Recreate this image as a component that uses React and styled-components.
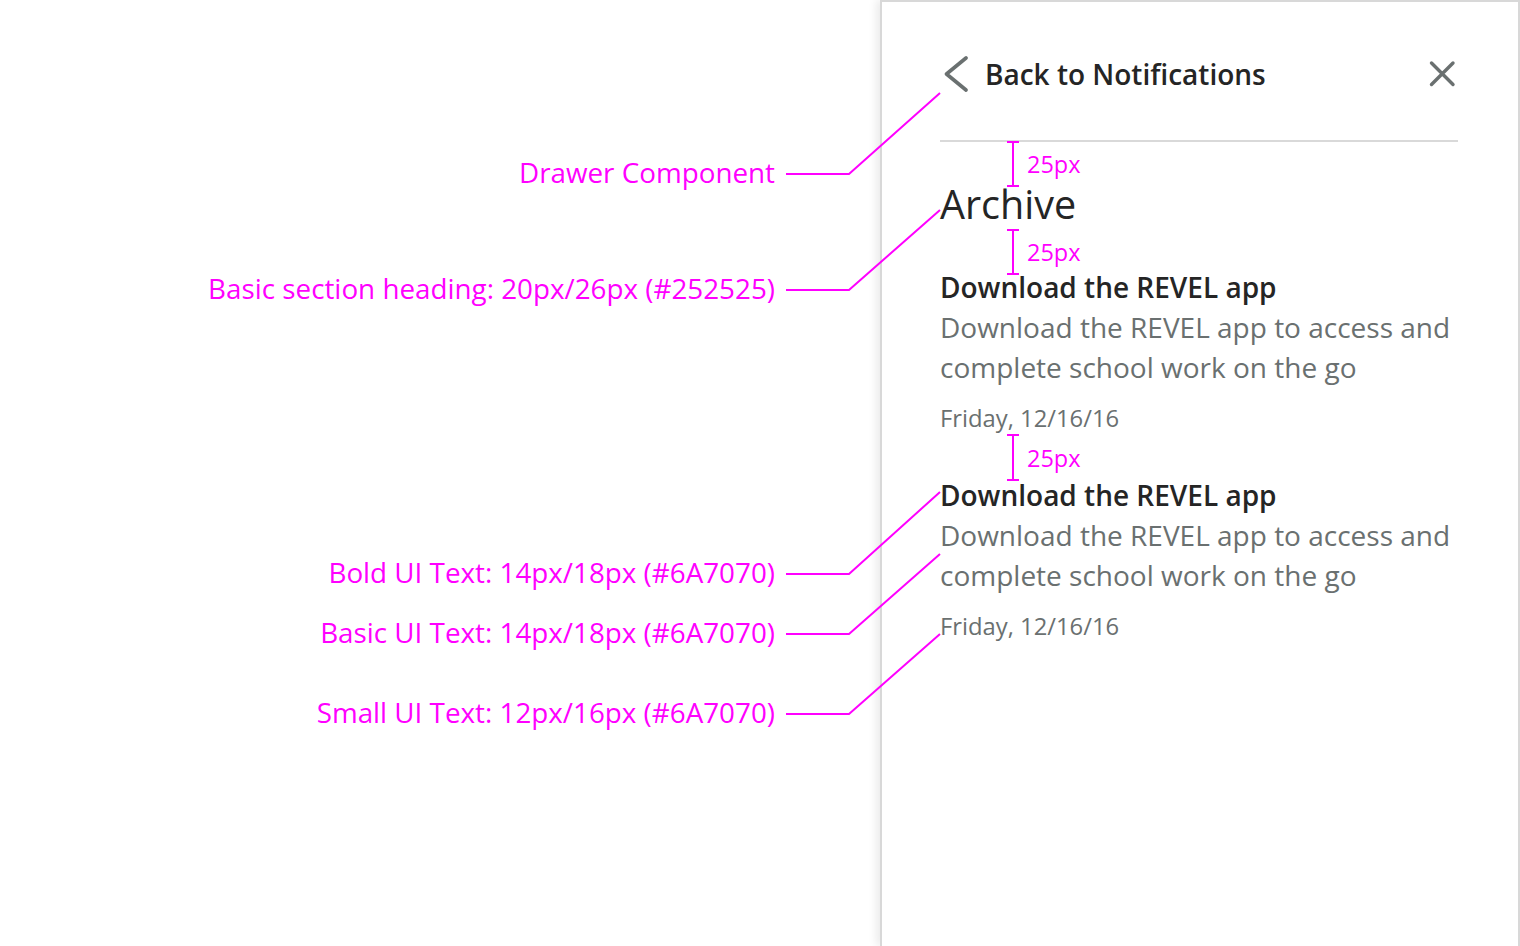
import React from "react";
import styled, { createGlobalStyle } from "styled-components";

const Global = createGlobalStyle`
  html, body { margin: 0; padding: 0; background: #ffffff; }
  body { font-family: "Open Sans", "Noto Sans", sans-serif; }
  * { box-sizing: border-box; }
`;

const MAGENTA = "#ff00ff";

const Page = styled.div`
  position: relative;
  display: flex;
  width: 1520px;
  height: 946px;
  overflow: hidden;
  background: #ffffff;
`;

const AnnotationArea = styled.div`
  position: relative;
  flex: 0 0 880px;
`;

const Callout = styled.div`
  position: absolute;
  right: 105px;
  top: ${(p) => p.$top}px;
  font-size: 27.8px;
  line-height: 36px;
  color: ${MAGENTA};
  white-space: nowrap;
`;

const Drawer = styled.aside`
  flex: 1;
  display: flex;
  flex-direction: column;
  border: 2px solid #d8d8d8;
  border-bottom: none;
  box-shadow: -4px 0 8px rgba(0, 0, 0, 0.08);
  padding: 54px 60px 0 58px;
  background: #ffffff;
`;

const Header = styled.header`
  display: flex;
  align-items: center;
  justify-content: space-between;
  height: 36px;
`;

const BackButton = styled.button`
  display: flex;
  align-items: center;
  gap: 15px;
  padding: 0;
  border: none;
  background: none;
  font-family: inherit;
  font-size: 28px;
  font-weight: 600;
  line-height: 36px;
  color: #252525;
  cursor: pointer;
`;

const CloseButton = styled.button`
  display: flex;
  padding: 0;
  border: none;
  background: none;
  cursor: pointer;
`;

const Divider = styled.hr`
  margin: 48px 0 0;
  border: none;
  height: 2px;
  background: #d9d9d9;
`;

const Heading = styled.h2`
  margin: 38px 0 0;
  font-size: 39.5px;
  line-height: 49px;
  font-weight: 400;
  color: #252525;
`;

const List = styled.ul`
  list-style: none;
  margin: 38px 0 0;
  padding: 0;
  display: flex;
  flex-direction: column;
  gap: 41px;
`;

const Item = styled.li`
  display: flex;
  flex-direction: column;
`;

const Title = styled.div`
  font-size: 28px;
  line-height: 40px;
  font-weight: 600;
  color: #252525;
`;

const Body = styled.div`
  font-size: 28px;
  line-height: 40px;
  color: #6a7070;
`;

const DateText = styled.div`
  margin-top: 15px;
  font-size: 23.8px;
  line-height: 32px;
  color: #6a7070;
`;

const Overlay = styled.svg`
  position: absolute;
  left: 0;
  top: 0;
  pointer-events: none;
`;

const Marker = styled.div`
  position: absolute;
  left: ${(p) => p.$left}px;
  top: ${(p) => p.$top}px;
  height: ${(p) => p.$h}px;
  display: flex;
  align-items: center;
  gap: 8px;
  pointer-events: none;
`;

const Beam = styled.div`
  position: relative;
  width: 12px;
  height: 100%;
  border-top: 2px solid ${MAGENTA};
  border-bottom: 2px solid ${MAGENTA};
  &::before {
    content: "";
    position: absolute;
    left: 5px;
    top: 0;
    bottom: 0;
    width: 2px;
    background: ${MAGENTA};
  }
`;

const MarkerLabel = styled.span`
  font-size: 23.5px;
  line-height: 30px;
  color: ${MAGENTA};
`;

const callouts = [
  { top: 154, text: "Drawer Component" },
  { top: 270, text: "Basic section heading: 20px/26px (#252525)" },
  { top: 554, text: "Bold UI Text: 14px/18px (#6A7070)" },
  { top: 614, text: "Basic UI Text: 14px/18px (#6A7070)" },
  { top: 694, text: "Small UI Text: 12px/16px (#6A7070)" },
];

const leaders = [
  { y: 174, tx: 940, ty: 93 },
  { y: 290, tx: 940, ty: 210 },
  { y: 574, tx: 940, ty: 492 },
  { y: 634, tx: 940, ty: 554 },
  { y: 714, tx: 940, ty: 634 },
];

const markers = [
  { top: 141, h: 46 },
  { top: 229, h: 46 },
  { top: 434, h: 47 },
];

const notifications = [
  {
    title: "Download the REVEL app",
    body: "Download the REVEL app to access and complete school work on the go",
    date: "Friday, 12/16/16",
  },
  {
    title: "Download the REVEL app",
    body: "Download the REVEL app to access and complete school work on the go",
    date: "Friday, 12/16/16",
  },
];

export default function App() {
  return (
    <>
      <Global />
      <Page>
        <AnnotationArea>
          {callouts.map((c) => (
            <Callout key={c.text} $top={c.top}>
              {c.text}
            </Callout>
          ))}
        </AnnotationArea>
        <Drawer>
          <Header>
            <BackButton>
              <svg width="30" height="36" viewBox="0 0 30 36" fill="none">
                <path
                  d="M26 2 L6.5 18 L26 34"
                  stroke="#6a7070"
                  strokeWidth="3.6"
                  strokeLinecap="round"
                  strokeLinejoin="round"
                />
              </svg>
              Back to Notifications
            </BackButton>
            <CloseButton aria-label="Close">
              <svg width="32" height="32" viewBox="0 0 32 32" fill="none">
                <path
                  d="M5.5 5 L27 26.5 M27 5 L5.5 26.5"
                  stroke="#6a7070"
                  strokeWidth="3.4"
                  strokeLinecap="round"
                />
              </svg>
            </CloseButton>
          </Header>
          <Divider />
          <Heading>Archive</Heading>
          <List>
            {notifications.map((n, i) => (
              <Item key={i}>
                <Title>{n.title}</Title>
                <Body>{n.body}</Body>
                <DateText>{n.date}</DateText>
              </Item>
            ))}
          </List>
        </Drawer>
        <Overlay width="1520" height="946" viewBox="0 0 1520 946">
          {leaders.map((l, i) => (
            <polyline
              key={i}
              points={`786,${l.y} 849,${l.y} ${l.tx},${l.ty}`}
              fill="none"
              stroke={MAGENTA}
              strokeWidth="2"
            />
          ))}
        </Overlay>
        {markers.map((m, i) => (
          <Marker key={i} $left={1007} $top={m.top} $h={m.h}>
            <Beam />
            <MarkerLabel>25px</MarkerLabel>
          </Marker>
        ))}
      </Page>
    </>
  );
}
